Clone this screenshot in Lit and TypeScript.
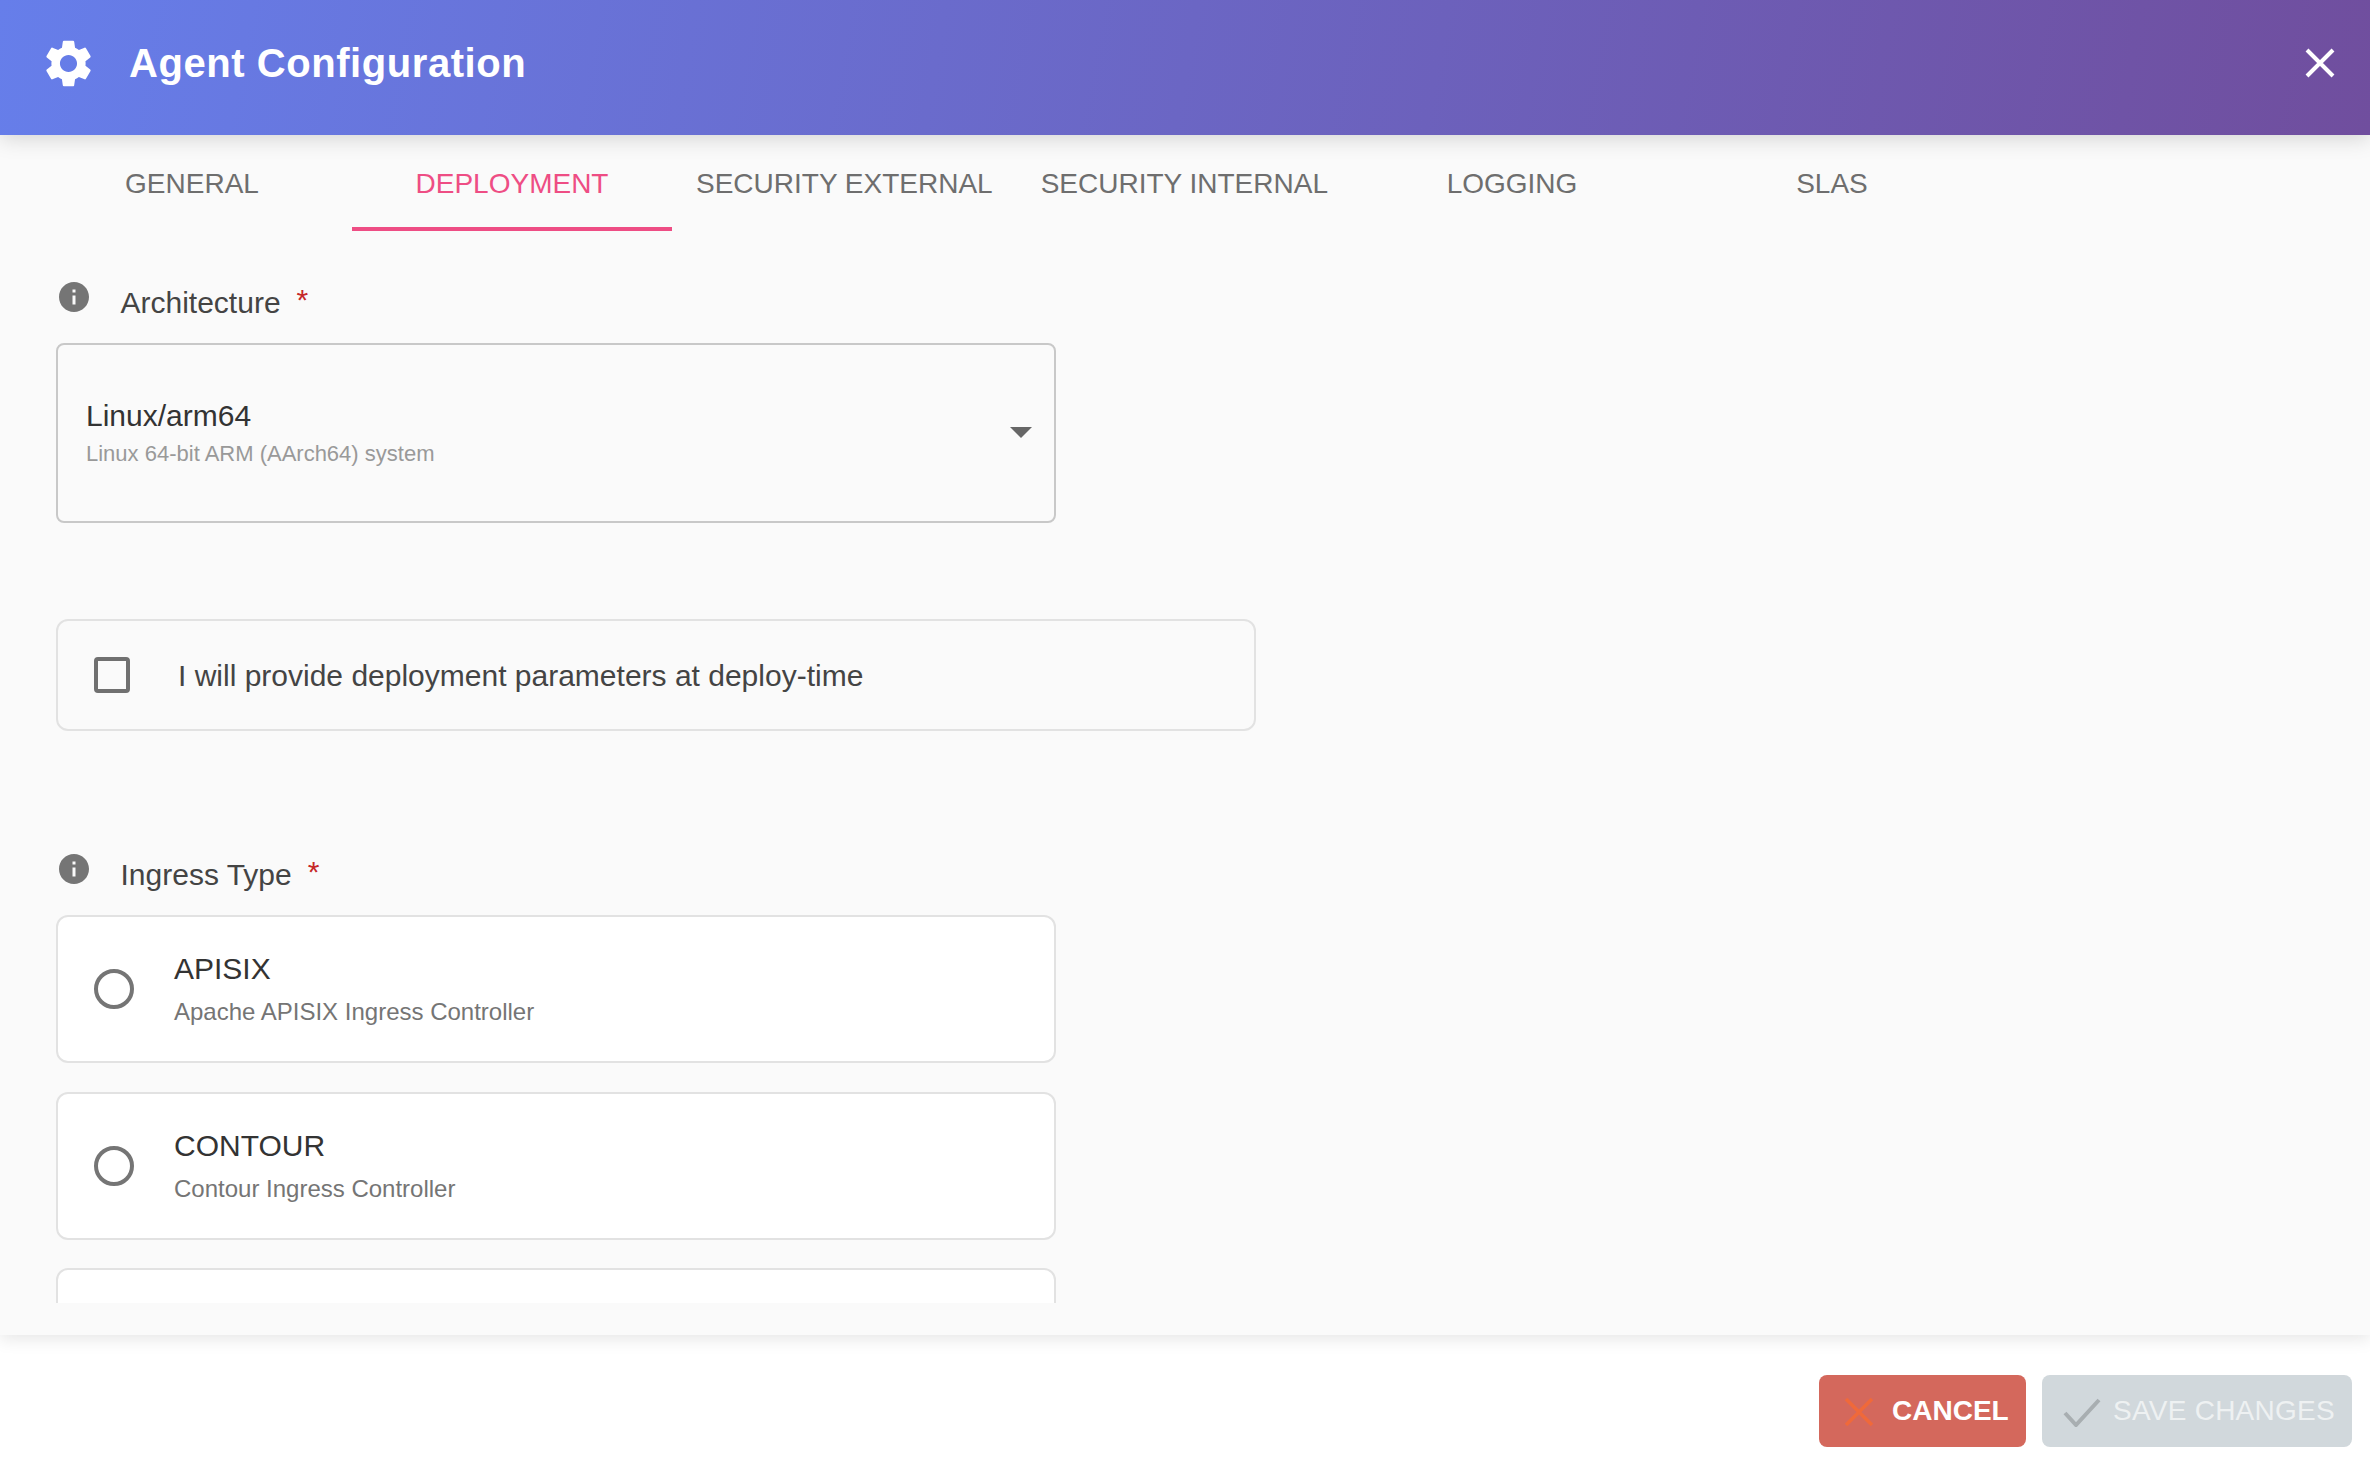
import { LitElement, html, css, svg } from "lit";
import { customElement } from "lit/decorators.js";

const INFO = svg`<path d="M12 2C6.48 2 2 6.48 2 12s4.48 10 10 10 10-4.48 10-10S17.52 2 12 2zm1 15h-2v-6h2v6zm0-8h-2V7h2v2z"/>`;
const GEAR = svg`<path d="M19.14 12.94c.04-.3.06-.61.06-.94 0-.32-.02-.64-.07-.94l2.03-1.58c.18-.14.23-.41.12-.61l-1.92-3.32c-.12-.22-.37-.29-.59-.22l-2.39.96c-.5-.38-1.03-.7-1.62-.94l-.36-2.54c-.04-.24-.24-.41-.48-.41h-3.84c-.24 0-.43.17-.47.41l-.36 2.54c-.59.24-1.13.57-1.62.94l-2.39-.96c-.22-.08-.47 0-.59.22L2.74 8.87c-.12.21-.08.47.12.61l2.03 1.58c-.05.3-.09.63-.09.94s.02.64.07.94l-2.03 1.58c-.18.14-.23.41-.12.61l1.92 3.32c.12.22.37.29.59.22l2.39-.96c.5.38 1.03.7 1.62.94l.36 2.54c.05.24.24.41.48.41h3.84c.24 0 .44-.17.47-.41l.36-2.54c.59-.24 1.13-.56 1.62-.94l2.39.96c.22.08.47 0 .59-.22l1.92-3.32c.12-.22.07-.47-.12-.61l-2.01-1.58zM12 15.6c-1.98 0-3.6-1.62-3.6-3.6s1.62-3.6 3.6-3.6 3.6 1.62 3.6 3.6-1.62 3.6-3.6 3.6z"/>`;

const TABS = ["GENERAL", "DEPLOYMENT", "SECURITY EXTERNAL", "SECURITY INTERNAL", "LOGGING", "SLAS"];

@customElement("app-root")
export class AppRoot extends LitElement {
  static styles = css`
    :host {
      display: flex;
      flex-direction: column;
      width: 2370px;
      height: 1477px;
      overflow: hidden;
      background: #fff;
      font-family: "Liberation Sans", Arial, sans-serif;
      color: #444;
    }
    .header {
      flex: none;
      height: 135px;
      box-sizing: border-box;
      padding: 0 34px 9px 40px;
      display: flex;
      align-items: center;
      background: linear-gradient(100deg, #667eea 0%, #704e9e 100%);
      box-shadow: 0 4px 20px rgba(0, 0, 0, 0.15);
      position: relative;
      z-index: 2;
      color: #fff;
    }
    .gear { width: 57px; height: 57px; fill: #fff; flex: none; }
    .title {
      margin-left: 32px;
      font-size: 40px;
      font-weight: 700;
      letter-spacing: 0.56px;
      line-height: 48px;
      flex: 1;
    }
    .close { width: 32px; height: 32px; stroke: #fff; stroke-width: 4; fill: none; flex: none; }
    .main {
      flex: none;
      height: 1200px;
      box-sizing: border-box;
      padding-bottom: 32px;
      display: flex;
      flex-direction: column;
      background: #fafafa;
      box-shadow: 0 4px 16px rgba(0, 0, 0, 0.1);
      position: relative;
      z-index: 1;
    }
    .tabs { flex: none; display: flex; height: 96px; padding-left: 32px; }
    .tab {
      box-sizing: border-box;
      min-width: 320px;
      padding: 0 24px;
      height: 96px;
      line-height: 97px;
      text-align: center;
      font-size: 28px;
      color: #6e6e6e;
      white-space: nowrap;
    }
    .tab.active { color: #ee4d84; border-bottom: 4px solid #ee4d84; }
    .scroll {
      flex: 1;
      min-height: 0;
      overflow: hidden;
      padding: 0 56px;
      display: flex;
      flex-direction: column;
      align-items: flex-start;
    }
    .label { display: flex; align-items: flex-start; height: 42px; flex: none; font-size: 30px; color: #444; }
    .label svg { width: 36px; height: 36px; fill: #757575; flex: none; }
    .label span { margin: 6px 0 0 28.5px; line-height: 36px; }
    .label i { font-style: normal; color: #c62828; margin: 3px 0 0 16px; line-height: 36px; font-size: 30px; }
    .label.a { margin-top: 48px; }
    .label.b { margin-top: 120.5px; }
    .select {
      box-sizing: border-box;
      width: 1000px;
      height: 180px;
      flex: none;
      margin-top: 22px;
      border: 2px solid #c8c8c8;
      border-radius: 8px;
      padding: 0 22px 0 28px;
      display: flex;
      align-items: center;
      justify-content: space-between;
    }
    .select-title { font-size: 30px; color: #333; line-height: 36px; margin-top: -1px; }
    .select-sub { font-size: 22px; color: #999; line-height: 26px; margin-top: 7px; }
    .arrow { width: 0; height: 0; border-left: 11px solid transparent; border-right: 11px solid transparent; border-top: 11px solid #666; margin-bottom: 1px; }
    .check {
      box-sizing: border-box;
      width: 1200px;
      height: 111.5px;
      flex: none;
      margin-top: 96px;
      border: 2px solid #e2e2e2;
      border-radius: 12px;
      padding: 0 0 0 36px;
      display: flex;
      align-items: center;
      font-size: 30px;
      color: #444;
    }
    .box { width: 36px; height: 36px; box-sizing: border-box; border: 4px solid #707070; border-radius: 4px; flex: none; margin-right: 48px; }
    .check-text { margin-top: 2px; }
    .card {
      box-sizing: border-box;
      width: 1000px;
      height: 148px;
      flex: none;
      margin-top: 28.5px;
      background: #fff;
      border: 2px solid #e2e2e2;
      border-radius: 12px;
      padding-left: 36px;
      display: flex;
      align-items: center;
    }
    .card.first { margin-top: 22px; }
    .radio { width: 40px; height: 40px; box-sizing: border-box; border: 4px solid #757575; border-radius: 50%; flex: none; margin-right: 40px; }
    .card-title { font-size: 30px; color: #333; line-height: 36px; }
    .card-sub { font-size: 24px; color: #757575; line-height: 30px; margin-top: 10px; }
    .footer {
      flex: 1;
      display: flex;
      justify-content: flex-end;
      align-items: flex-start;
      gap: 16px;
      padding: 40px 18px 0 0;
      background: #fff;
    }
    .btn {
      height: 72px;
      box-sizing: border-box;
      border-radius: 8px;
      display: flex;
      align-items: center;
      font-size: 28px;
      white-space: nowrap;
    }
    .cancel { width: 207px; background: #d4685c; color: #fff; font-weight: 700; padding-left: 26px; }
    .cancel svg { width: 28px; height: 28px; stroke: #f0693a; stroke-width: 3.5; fill: none; flex: none; margin: 2px 19px 0 0; }
    .save { width: 310px; background: #d1d8dc; color: #eef1f2; padding-left: 22px; letter-spacing: 0.25px; }
    .save svg { width: 38px; height: 30px; stroke: #a8aeb1; stroke-width: 4; fill: none; flex: none; margin: 2px 12px 0 -1px; }
  `;

  private label(text: string, cls: string) {
    return html`<div class="label ${cls}">
      <svg viewBox="0 0 24 24">${INFO}</svg><span>${text}</span><i>*</i>
    </div>`;
  }

  private card(title: string, sub: string, first = false) {
    return html`<div class="card ${first ? "first" : ""}">
      <div class="radio"></div>
      <div>
        <div class="card-title">${title}</div>
        <div class="card-sub">${sub}</div>
      </div>
    </div>`;
  }

  render() {
    return html`
      <div class="header">
        <svg class="gear" viewBox="0 0 24 24">${GEAR}</svg>
        <div class="title">Agent Configuration</div>
        <svg class="close" viewBox="0 0 32 32"><path d="M3 3L29 29M29 3L3 29"/></svg>
      </div>
      <div class="main">
        <div class="tabs">
          ${TABS.map((t, i) => html`<div class="tab ${i === 1 ? "active" : ""}">${t}</div>`)}
        </div>
        <div class="scroll">
          ${this.label("Architecture", "a")}
          <div class="select">
            <div>
              <div class="select-title">Linux/arm64</div>
              <div class="select-sub">Linux 64-bit ARM (AArch64) system</div>
            </div>
            <div class="arrow"></div>
          </div>
          <div class="check">
            <div class="box"></div>
            <div class="check-text">I will provide deployment parameters at deploy-time</div>
          </div>
          ${this.label("Ingress Type", "b")}
          ${this.card("APISIX", "Apache APISIX Ingress Controller", true)}
          ${this.card("CONTOUR", "Contour Ingress Controller")}
          <div class="card"></div>
        </div>
      </div>
      <div class="footer">
        <div class="btn cancel">
          <svg viewBox="0 0 28 28"><path d="M1 1L27 27M27 1L1 27"/></svg>CANCEL
        </div>
        <div class="btn save">
          <svg viewBox="0 0 38 30"><path d="M2 16L13 28L36 3"/></svg>SAVE CHANGES
        </div>
      </div>
    `;
  }
}
